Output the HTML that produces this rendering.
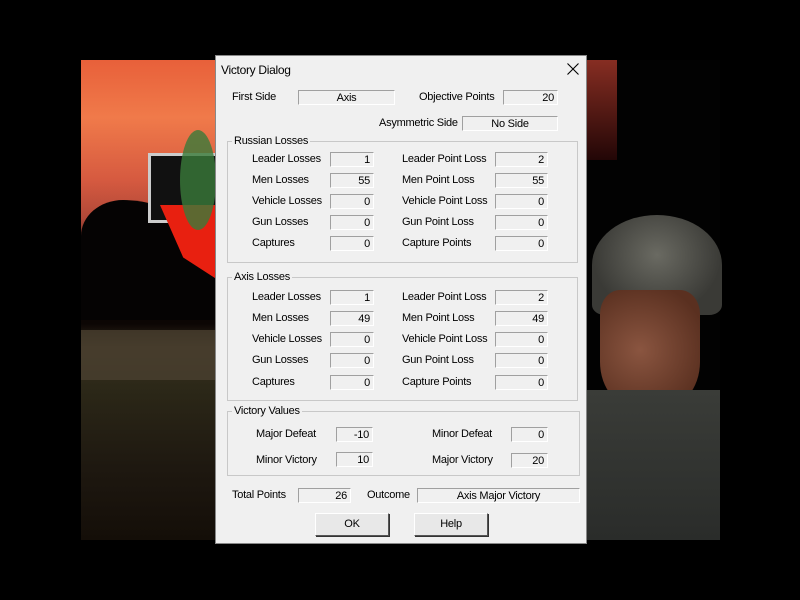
<!DOCTYPE html>
<html><head><style>
*{margin:0;padding:0;box-sizing:border-box}
body{width:800px;height:600px;background:#000;position:relative;overflow:hidden;font-family:"Liberation Sans",sans-serif;font-size:11px;color:#000;letter-spacing:-0.25px}
.a{position:absolute}
.dlg{left:215px;top:55px;width:372px;height:489px;background:#f0f0f0;border:1px solid #888}
.t{position:absolute;white-space:nowrap;line-height:13px}
.f{position:absolute;height:15px;border-top:1px solid #a0a0a0;border-left:1px solid #a0a0a0;border-bottom:1px solid #fff;border-right:1px solid #fff;background:#f0f0f0;text-align:right;padding-right:3px;line-height:14px;white-space:nowrap}
.c{text-align:center;padding:0}
.g{position:absolute;border:1px solid #c8c8c8}
.gl{position:absolute;background:#f0f0f0;padding:0 2px;line-height:12px;white-space:nowrap}
.b{position:absolute;height:23px;border:1px solid #555;border-top-color:#fff;border-left-color:#fff;box-shadow:1px 1px 0 #333;background:#e8e8e8;text-align:center;line-height:21px}
</style></head><body>
<div class="a" style="left:81px;top:60px;width:140px;height:480px;background:linear-gradient(180deg,#e8603a 0%,#f07a4a 12%,#d65a40 25%,#b04838 33%,#0c0604 45%,#0c0604 55%,#3a3020 60%,#2c2818 68%,#1e1810 85%,#140e08 100%)"></div>
<div class="a" style="left:81px;top:200px;width:140px;height:120px;background:#050303;border-radius:30% 70% 0 0"></div>
<div class="a" style="left:148px;top:153px;width:70px;height:70px;background:#111;border:3px solid #ccc"></div>
<div class="a" style="left:160px;top:205px;width:58px;height:75px;background:#e82010;clip-path:polygon(0 0,100% 0,100% 100%,40% 70%)"></div>
<div class="a" style="left:180px;top:130px;width:36px;height:100px;background:#3a7a3a;border-radius:50%;opacity:.8"></div>
<div class="a" style="left:81px;top:330px;width:140px;height:50px;background:#4a4030;opacity:.8"></div>
<div class="a" style="left:587px;top:60px;width:133px;height:480px;background:#020202"></div>
<div class="a" style="left:587px;top:60px;width:30px;height:100px;background:linear-gradient(180deg,#c04030,#300808);opacity:.7"></div>
<div class="a" style="left:592px;top:215px;width:130px;height:100px;background:radial-gradient(ellipse at 50% 40%,#6a6a62,#3a3a36 70%);border-radius:50% 50% 10% 10%"></div>
<div class="a" style="left:600px;top:290px;width:100px;height:120px;background:radial-gradient(ellipse at 40% 50%,#8a5540,#5a3020 80%);border-radius:20% 20% 40% 40%"></div>
<div class="a" style="left:587px;top:390px;width:133px;height:150px;background:linear-gradient(180deg,#3a3c38,#2a2c2a)"></div>

<div class="a dlg">
<div class="t" style="left:5px;top:8px;font-size:12px;letter-spacing:-0.3px">Victory Dialog</div>
<svg class="a" style="left:351px;top:7px" width="12" height="12"><path d="M0.5 0.5L11.5 11.5M11.5 0.5L0.5 11.5" stroke="#000" stroke-width="1.1"/></svg>

<div class="t" style="left:16px;top:35px">First Side</div>
<div class="f c" style="left:82px;top:34px;width:97px">Axis</div>
<div class="t" style="left:203px;top:35px">Objective Points</div>
<div class="f" style="left:287px;top:34px;width:55px">20</div>
<div class="t" style="left:163px;top:61px">Asymmetric Side</div>
<div class="f c" style="left:246px;top:60px;width:96px">No Side</div>

<div class="g" style="left:11px;top:85px;width:351px;height:122px"></div>
<div class="gl" style="left:16px;top:79px">Russian Losses</div>
<div class="g" style="left:11px;top:221px;width:351px;height:124px"></div>
<div class="gl" style="left:16px;top:215px">Axis Losses</div>
<div class="g" style="left:11px;top:355px;width:353px;height:65px"></div>
<div class="gl" style="left:16px;top:349px">Victory Values</div>

<div class="t" style="left:36px;top:97px">Leader Losses</div><div class="f" style="left:114px;top:96px;width:44px">1</div>
<div class="t" style="left:186px;top:97px">Leader Point Loss</div><div class="f" style="left:279px;top:96px;width:53px">2</div>
<div class="t" style="left:36px;top:118px">Men Losses</div><div class="f" style="left:114px;top:117px;width:44px">55</div>
<div class="t" style="left:186px;top:118px">Men Point Loss</div><div class="f" style="left:279px;top:117px;width:53px">55</div>
<div class="t" style="left:36px;top:139px">Vehicle Losses</div><div class="f" style="left:114px;top:138px;width:44px">0</div>
<div class="t" style="left:186px;top:139px">Vehicle Point Loss</div><div class="f" style="left:279px;top:138px;width:53px">0</div>
<div class="t" style="left:36px;top:160px">Gun Losses</div><div class="f" style="left:114px;top:159px;width:44px">0</div>
<div class="t" style="left:186px;top:160px">Gun Point Loss</div><div class="f" style="left:279px;top:159px;width:53px">0</div>
<div class="t" style="left:36px;top:181px">Captures</div><div class="f" style="left:114px;top:180px;width:44px">0</div>
<div class="t" style="left:186px;top:181px">Capture Points</div><div class="f" style="left:279px;top:180px;width:53px">0</div>

<div class="t" style="left:36px;top:235px">Leader Losses</div><div class="f" style="left:114px;top:234px;width:44px">1</div>
<div class="t" style="left:186px;top:235px">Leader Point Loss</div><div class="f" style="left:279px;top:234px;width:53px">2</div>
<div class="t" style="left:36px;top:256px">Men Losses</div><div class="f" style="left:114px;top:255px;width:44px">49</div>
<div class="t" style="left:186px;top:256px">Men Point Loss</div><div class="f" style="left:279px;top:255px;width:53px">49</div>
<div class="t" style="left:36px;top:277px">Vehicle Losses</div><div class="f" style="left:114px;top:276px;width:44px">0</div>
<div class="t" style="left:186px;top:277px">Vehicle Point Loss</div><div class="f" style="left:279px;top:276px;width:53px">0</div>
<div class="t" style="left:36px;top:298px">Gun Losses</div><div class="f" style="left:114px;top:297px;width:44px">0</div>
<div class="t" style="left:186px;top:298px">Gun Point Loss</div><div class="f" style="left:279px;top:297px;width:53px">0</div>
<div class="t" style="left:36px;top:320px">Captures</div><div class="f" style="left:114px;top:319px;width:44px">0</div>
<div class="t" style="left:186px;top:320px">Capture Points</div><div class="f" style="left:279px;top:319px;width:53px">0</div>

<div class="t" style="left:40px;top:372px">Major Defeat</div><div class="f" style="left:120px;top:371px;width:37px">-10</div>
<div class="t" style="left:216px;top:372px">Minor Defeat</div><div class="f" style="left:295px;top:371px;width:37px">0</div>
<div class="t" style="left:40px;top:398px">Minor Victory</div><div class="f" style="left:120px;top:396px;width:37px">10</div>
<div class="t" style="left:216px;top:398px">Major Victory</div><div class="f" style="left:295px;top:397px;width:37px">20</div>

<div class="t" style="left:16px;top:433px">Total Points</div><div class="f" style="left:82px;top:432px;width:53px">26</div>
<div class="t" style="left:151px;top:433px">Outcome</div><div class="f c" style="left:201px;top:432px;width:163px">Axis Major Victory</div>

<div class="b" style="left:99px;top:457px;width:74px">OK</div>
<div class="b" style="left:198px;top:457px;width:74px">Help</div>
</div>
</body></html>
